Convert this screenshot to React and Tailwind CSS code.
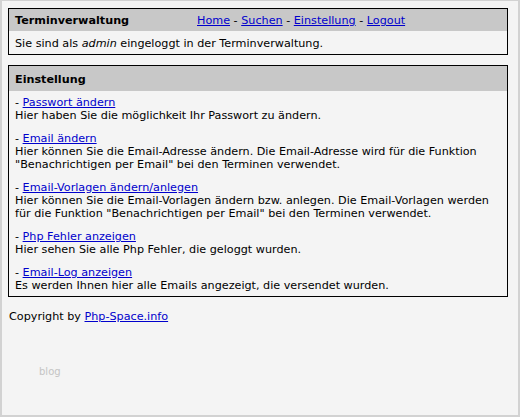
export default function App() {
  const font = { fontFamily: '"DejaVu Sans", Verdana, sans-serif' };

  const items = [
    { link: "Passwort ändern", text: ["Hier haben Sie die möglichkeit Ihr Passwort zu ändern."] },
    {
      link: "Email ändern",
      text: [
        "Hier können Sie die Email-Adresse ändern. Die Email-Adresse wird für die Funktion",
        "\"Benachrichtigen per Email\" bei den Terminen verwendet.",
      ],
    },
    {
      link: "Email-Vorlagen ändern/anlegen",
      text: [
        "Hier können Sie die Email-Vorlagen ändern bzw. anlegen. Die Email-Vorlagen werden",
        "für die Funktion \"Benachrichtigen per Email\" bei den Terminen verwendet.",
      ],
    },
    { link: "Php Fehler anzeigen", text: ["Hier sehen Sie alle Php Fehler, die geloggt wurden."] },
    { link: "Email-Log anzeigen", text: ["Es werden Ihnen hier alle Emails angezeigt, die versendet wurden."] },
  ];

  const nav = ["Home", "Suchen", "Einstellung", "Logout"];

  return (
    <div
      style={font}
      className="w-[520px] h-[417px] bg-[#f4f4f4] border-2 border-t border-[#d2d2d2] px-[6px] pt-[7px] text-[11.2px] leading-[13px] text-black"
    >
      <div className="w-[500px] border-[1.5px] border-black">
        <div className="flex h-[22px] items-center bg-[#c8c8c8] px-[6px] pt-[1px]">
          <span className="w-[182px] font-bold">Terminverwaltung</span>
          <span>
            {nav.map((n, i) => (
              <span key={n}>
                {i > 0 && " - "}
                <a href="#" className="text-[#0000cc] underline">{n}</a>
              </span>
            ))}
          </span>
        </div>
        <div className="flex h-[23px] items-center px-[6px] pt-[1px]">
          <span>
            Sie sind als <i>admin</i> eingeloggt in der Terminverwaltung.
          </span>
        </div>
      </div>

      <div className="mt-[10px] w-[500px] border-[1.5px] border-black">
        <div className="flex h-[25px] items-center bg-[#c8c8c8] px-[6px] pt-[1px] font-bold">Einstellung</div>
        <div className="flex flex-col gap-[10px] px-[6px] pt-[5px] pb-[4px]">
          {items.map((it) => (
            <div key={it.link}>
              <div>
                - <a href="#" className="text-[#0000cc] underline">{it.link}</a>
              </div>
              {it.text.map((t) => (
                <div key={t}>{t}</div>
              ))}
            </div>
          ))}
        </div>
      </div>

      <div className="mt-[13px] pl-[1px]">
        Copyright by <a href="#" className="text-[#0000cc] underline">Php-Space.info</a>
      </div>

      <div className="mt-[42px] pl-[31px] text-[10px] text-[#c4c4c4]">blog</div>
    </div>
  );
}
